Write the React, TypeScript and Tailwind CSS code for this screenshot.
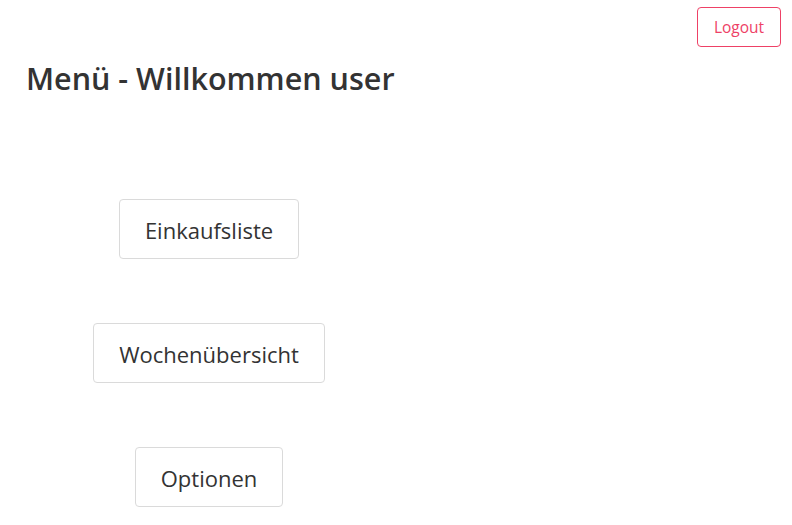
const menuItems = ["Einkaufsliste", "Wochenübersicht", "Optionen"];

export default function App() {
  return (
    <div className="relative min-h-[525px] bg-white text-[#333333] font-['Open_Sans','Noto_Sans',sans-serif]">
      <div className="flex justify-end pt-[7px] pr-[11px]">
        <button className="h-[40px] w-[84px] rounded-[4px] border border-[#ee4166] pt-[2px] text-[15.5px] text-[#ee4166] bg-white">
          Logout
        </button>
      </div>
      <h2 className="mt-[12px] pl-[26px] text-[30.5px] font-semibold leading-[38px]">
        Menü - Willkommen user
      </h2>
      <div className="mt-[102px] flex w-[418px] flex-col items-center gap-[64px]">
        {menuItems.map((item) => (
          <button
            key={item}
            className="h-[60px] rounded-[4px] border border-[#dadada] bg-white px-[25px] pt-[2px] text-[22px] text-[#333333]"
          >
            {item}
          </button>
        ))}
      </div>
    </div>
  );
}
